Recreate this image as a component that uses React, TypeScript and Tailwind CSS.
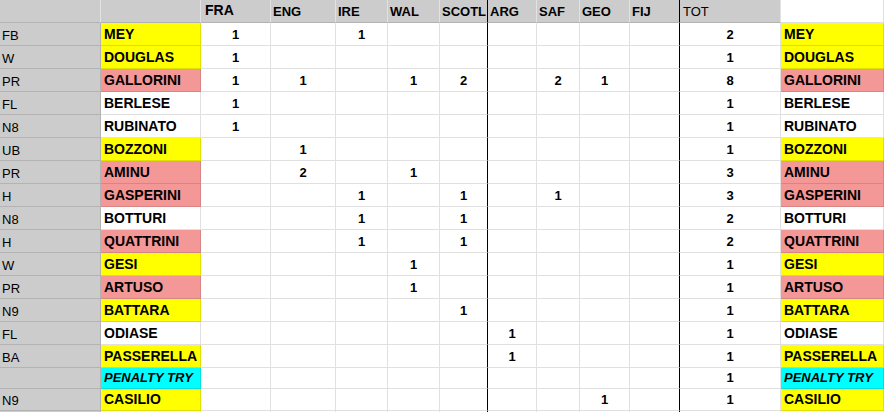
import React from 'react';

type Fill = 'yellow' | 'pink' | 'white' | 'cyan';

interface Player {
  pos: string;
  name: string;
  fill: Fill;
  pts: Record<string, number>;
  tot: number;
  italic?: boolean;
}

const nations = ['FRA', 'ENG', 'IRE', 'WAL', 'SCOTL', 'ARG', 'SAF', 'GEO', 'FIJ'];

const players: Player[] = [
  { pos: 'FB', name: 'MEY', fill: 'yellow', pts: { FRA: 1, IRE: 1 }, tot: 2 },
  { pos: 'W', name: 'DOUGLAS', fill: 'yellow', pts: { FRA: 1 }, tot: 1 },
  { pos: 'PR', name: 'GALLORINI', fill: 'pink', pts: { FRA: 1, ENG: 1, WAL: 1, SCOTL: 2, SAF: 2, GEO: 1 }, tot: 8 },
  { pos: 'FL', name: 'BERLESE', fill: 'white', pts: { FRA: 1 }, tot: 1 },
  { pos: 'N8', name: 'RUBINATO', fill: 'white', pts: { FRA: 1 }, tot: 1 },
  { pos: 'UB', name: 'BOZZONI', fill: 'yellow', pts: { ENG: 1 }, tot: 1 },
  { pos: 'PR', name: 'AMINU', fill: 'pink', pts: { ENG: 2, WAL: 1 }, tot: 3 },
  { pos: 'H', name: 'GASPERINI', fill: 'pink', pts: { IRE: 1, SCOTL: 1, SAF: 1 }, tot: 3 },
  { pos: 'N8', name: 'BOTTURI', fill: 'white', pts: { IRE: 1, SCOTL: 1 }, tot: 2 },
  { pos: 'H', name: 'QUATTRINI', fill: 'pink', pts: { IRE: 1, SCOTL: 1 }, tot: 2 },
  { pos: 'W', name: 'GESI', fill: 'yellow', pts: { WAL: 1 }, tot: 1 },
  { pos: 'PR', name: 'ARTUSO', fill: 'pink', pts: { WAL: 1 }, tot: 1 },
  { pos: 'N9', name: 'BATTARA', fill: 'yellow', pts: { SCOTL: 1 }, tot: 1 },
  { pos: 'FL', name: 'ODIASE', fill: 'white', pts: { ARG: 1 }, tot: 1 },
  { pos: 'BA', name: 'PASSERELLA', fill: 'yellow', pts: { ARG: 1 }, tot: 1 },
  { pos: '', name: 'PENALTY TRY', fill: 'cyan', pts: {}, tot: 1, italic: true },
  { pos: 'N9', name: 'CASILIO', fill: 'yellow', pts: { GEO: 1 }, tot: 1 },
];

const fillClass: Record<Fill, string> = {
  yellow: 'bg-[#ffff00]',
  pink: 'bg-[#f49797]',
  white: 'bg-white',
  cyan: 'bg-[#00ffff]',
};

// the two thick separators in the sheet
const edge = (n: string) =>
  n === 'SCOTL' || n === 'FIJ' ? 'border-r-black' : 'border-r-black/[0.12]';

const rowHeight = (i: number) => (i === 15 ? 'h-[21px]' : i === 16 ? 'h-[22px]' : 'h-[23px]');

const cell = 'flex items-end overflow-hidden whitespace-nowrap leading-none border-r border-b border-b-black/[0.12]';

const NameCell: React.FC<{ p: Player; h: string }> = ({ p, h }) => (
  <div
    className={`${cell} ${h} ${fillClass[p.fill]} border-r-black/[0.12] pl-[3px] pb-[4px] font-bold text-black ${
      p.italic ? 'italic text-[13px]' : 'text-[14px]'
    }`}
  >
    {p.name}
  </div>
);

export default function App() {
  return (
    <div className="w-[884px] h-[412px] overflow-hidden bg-white font-['Liberation_Sans',Arial,sans-serif] text-black">
      <div className="grid grid-cols-[101px_100px_70px_65px_52px_52px_48px_49px_43px_50px_50px_101px_103px]">
        {/* header */}
        <div className={`${cell} h-[23px] bg-[#cccccc] border-r-[#e2e2e2]`} />
        <div className={`${cell} h-[23px] bg-[#cccccc] border-r-[#e2e2e2]`} />
        {nations.map((n) => (
          <div
            key={n}
            className={`${cell} h-[23px] bg-[#cccccc] font-bold ${
              n === 'SCOTL' || n === 'FIJ' ? 'border-r-black' : 'border-r-[#e2e2e2]'
            } ${n === 'FRA' ? 'text-[14px] pl-[4px] pb-[5px]' : 'text-[13px] pl-[2px] pb-[4px]'}`}
          >
            {n}
          </div>
        ))}
        <div className={`${cell} h-[23px] bg-[#cccccc] border-r-[#e2e2e2] text-[13px] pl-[3px] pb-[4px]`}>TOT</div>
        <div className={`${cell} h-[23px] bg-white border-r-black/[0.12]`} />

        {players.map((p, i) => {
          const h = rowHeight(i);
          return (
            <React.Fragment key={i}>
              <div className={`${cell} ${h} bg-[#cccccc] border-r-black/[0.12] pl-[2px] pb-[3px] text-[13px]`}>{p.pos}</div>
              <NameCell p={p} h={h} />
              {nations.map((n) => (
                <div
                  key={n}
                  className={`${cell} ${h} ${edge(n)} justify-center pb-[4px] text-[13px] font-bold`}
                >
                  {p.pts[n] ?? ''}
                </div>
              ))}
              <div className={`${cell} ${h} border-r-black/[0.12] justify-center pb-[4px] text-[13px] font-bold`}>
                {p.tot}
              </div>
              <NameCell p={p} h={h} />
            </React.Fragment>
          );
        })}

        {/* next empty sheet row, mostly cut off */}
        <div className={`${cell} h-[23px] bg-[#cccccc] border-r-black/[0.12]`} />
        <div className={`${cell} h-[23px] border-r-black/[0.12]`} />
        {nations.map((n) => (
          <div key={n} className={`${cell} h-[23px] ${edge(n)}`} />
        ))}
        <div className={`${cell} h-[23px] border-r-black/[0.12]`} />
        <div className={`${cell} h-[23px] border-r-black/[0.12]`} />
      </div>
    </div>
  );
}
